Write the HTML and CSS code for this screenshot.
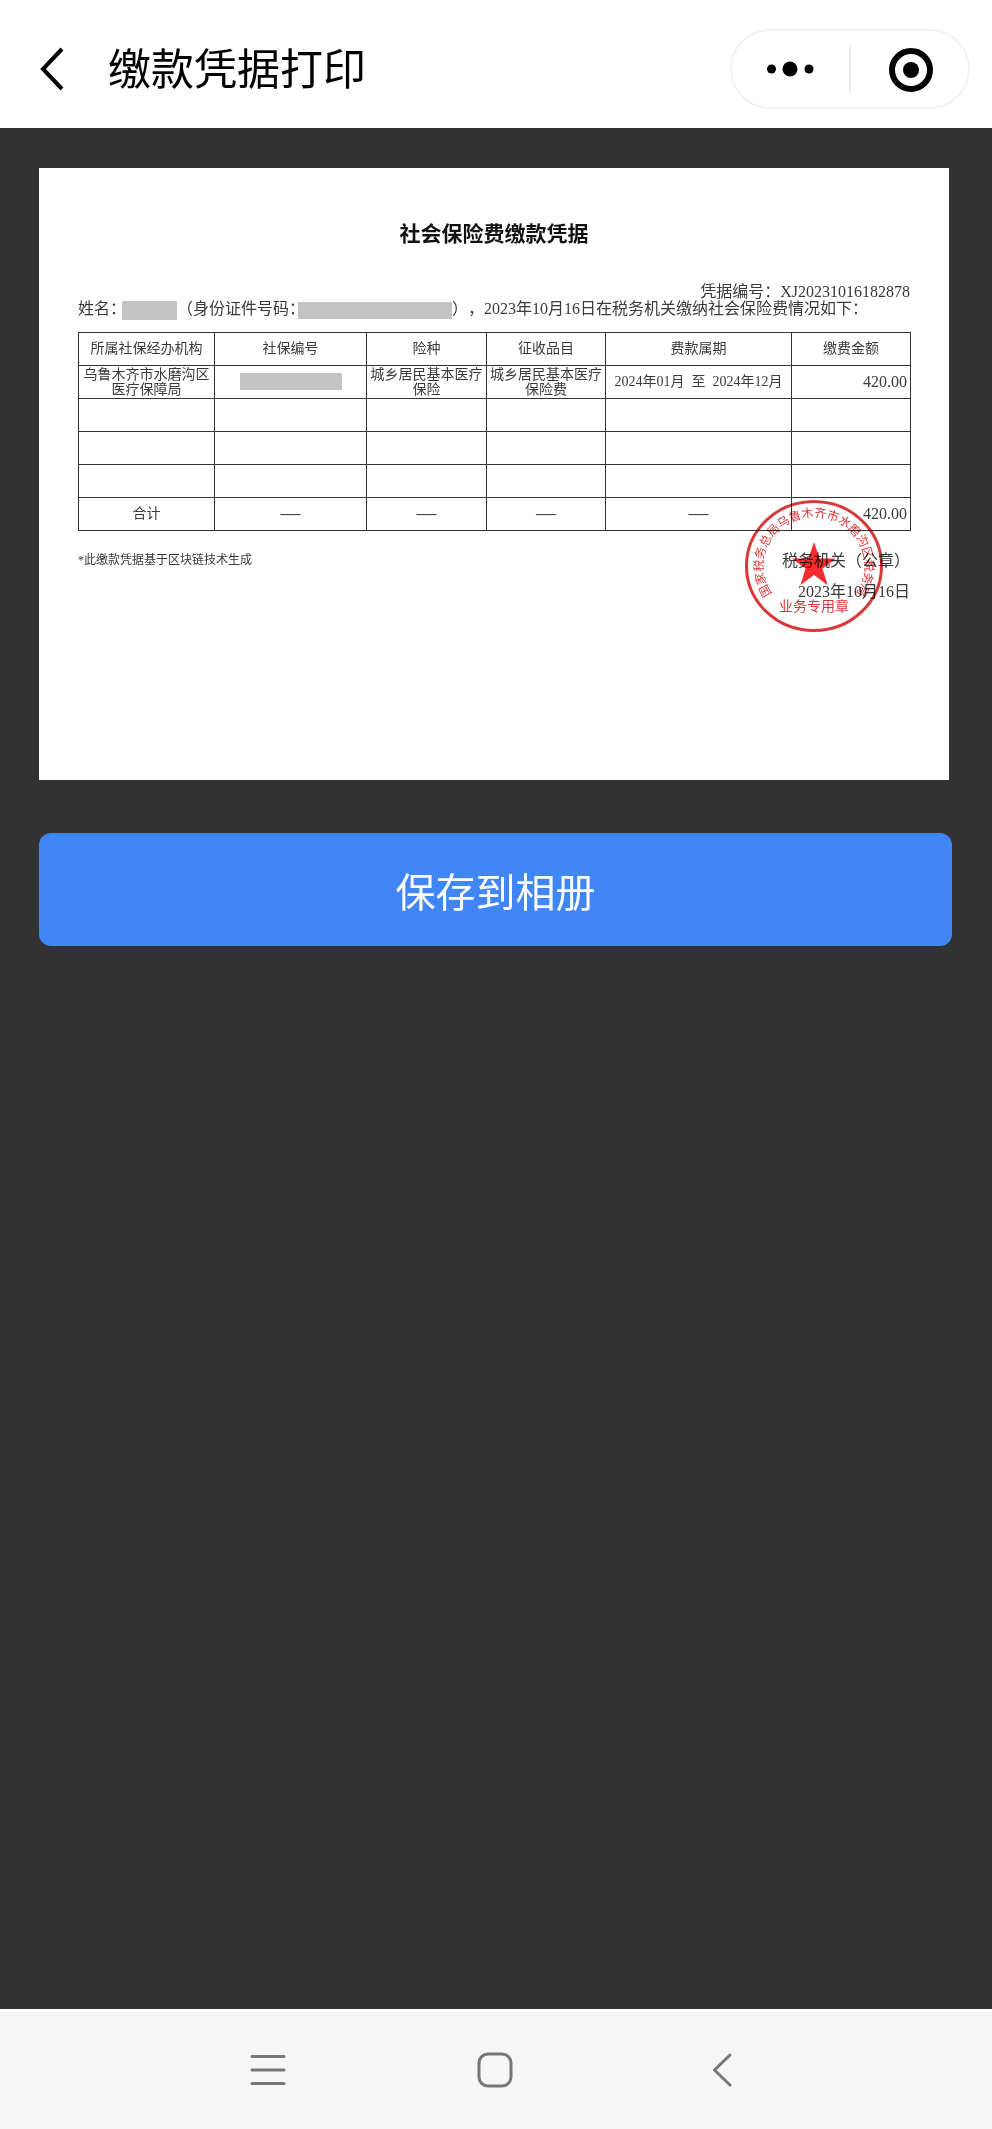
FILE: index.html
```html
<!DOCTYPE html>
<html lang="zh-CN">
<head>
<meta charset="utf-8">
<meta name="viewport" content="width=device-width, initial-scale=1">
<title>缴款凭据打印</title>
<link rel="stylesheet" href="styles.css">
</head>
<body>
<header class="topbar">
  <button class="back" type="button" aria-label="返回">
    <svg width="24" height="44" viewBox="0 0 24 44"><path d="M22 2 3 22 22 42" fill="none" stroke="#000" stroke-width="4"/></svg>
  </button>
  <h1 class="page-title">缴款凭据打印</h1>
  <div class="capsule">
    <button class="capsule-btn" type="button" aria-label="更多">
      <svg width="48" height="16" viewBox="0 0 48 16"><circle cx="4.500" cy="8" r="4.5"/><circle cx="23" cy="8" r="7.5"/><circle cx="42" cy="8" r="4.5"/></svg>
    </button>
    <span class="capsule-line"></span>
    <button class="capsule-btn" type="button" aria-label="关闭">
      <svg width="46" height="46" viewBox="0 0 46 46"><circle cx="24" cy="24" r="19" fill="none" stroke="#000" stroke-width="6"/><circle cx="24" cy="24" r="8"/></svg>
    </button>
  </div>
</header>

<main class="content">
  <article class="sheet">
    <h2 class="sheet-title">社会保险费缴款凭据</h2>
    <p class="serial">凭据编号：XJ20231016182878</p>
    <p class="summary">姓名：<span class="mask mask-name"></span>（身份证件号码：<span class="mask mask-id"></span>），2023年10月16日在税务机关缴纳社会保险费情况如下：</p>
    <table class="fees">
      <colgroup><col class="c-org"><col class="c-no"><col class="c-kind"><col class="c-item"><col class="c-period"><col class="c-sum"></colgroup>
      <thead>
        <tr><th>所属社保经办机构</th><th>社保编号</th><th>险种</th><th>征收品目</th><th>费款属期</th><th>缴费金额</th></tr>
      </thead>
      <tbody>
        <tr><td>乌鲁木齐市水磨沟区<br>医疗保障局</td><td><span class="mask mask-no"></span></td><td>城乡居民基本医疗<br>保险</td><td>城乡居民基本医疗<br>保险费</td><td>2024年01月&nbsp; 至 &nbsp;2024年12月</td><td class="amount">420.00</td></tr>
        <tr><td></td><td></td><td></td><td></td><td></td><td></td></tr>
        <tr><td></td><td></td><td></td><td></td><td></td><td></td></tr>
        <tr><td></td><td></td><td></td><td></td><td></td><td></td></tr>
        <tr><td>合计</td><td class="dash">—</td><td class="dash">—</td><td class="dash">—</td><td class="dash">—</td><td class="amount">420.00</td></tr>
      </tbody>
    </table>
    <footer class="sheet-foot">
      <p class="note">*此缴款凭据基于区块链技术生成</p>
      <div class="sign">
        <p>税务机关（公章）</p>
        <p>2023年10月16日</p>
        <svg class="seal" width="140" height="134" viewBox="0 0 140 134">
          <defs><path id="seal-arc" d="M70 116A51 49 0 0 1 70 18A51 49 0 0 1 70 116"/></defs>
          <ellipse cx="70" cy="67" rx="67.5" ry="64.5" fill="none" stroke="#d9383a" stroke-width="3"/>
          <text class="seal-ring" text-anchor="middle"><textPath href="#seal-arc" startOffset="50%">国家税务总局乌鲁木齐市水磨沟区税务局</textPath></text>
          <path d="M70 43 75.500 59.500H92L78.500 69.500 83.500 86 70 76 56.500 86 61.500 69.500 48 59.500H64.500Z" fill="#f52a2c"/>
          <text class="seal-base" x="70" y="112" text-anchor="middle">业务专用章</text>
        </svg>
      </div>
    </footer>
  </article>
  <button class="save" type="button">保存到相册</button>
</main>

<nav class="sysbar">
  <button type="button" aria-label="最近任务">
    <svg width="36" height="36" viewBox="0 0 36 36"><path d="M2 4.500h32M2 18h32M2 31.500h32"/></svg>
  </button>
  <button type="button" aria-label="主屏幕">
    <svg width="36" height="36" viewBox="0 0 36 36"><rect x="2" y="2" width="32" height="32" rx="9"/></svg>
  </button>
  <button type="button" aria-label="返回上一级">
    <svg width="36" height="36" viewBox="0 0 36 36"><path d="M26 3 10.500 18 26 33"/></svg>
  </button>
</nav>
</body>
</html>
```

FILE: styles.css
```css
* {
  box-sizing: border-box;
}

body {
  margin: 0;
  min-height: 100vh;
  display: flex;
  flex-direction: column;
  background: #323232;
  color: #000;
  font-family: "Noto Sans CJK SC", sans-serif;
  text-spacing-trim: space-all;
}

h1, h2, p {
  margin: 0;
  font-weight: 400;
}

button {
  display: flex;
  align-items: center;
  justify-content: center;
  padding: 0;
  border: 0;
  background: none;
  font-family: inherit;
}

.topbar {
  display: flex;
  align-items: center;
  height: 128px;
  padding: 10px 22px 0 40px;
  background: #fff;
}

.page-title {
  flex: 1;
  margin-left: 44px;
  padding-bottom: 6px;
  font-size: 43px;
  line-height: 60px;
}

.capsule {
  display: flex;
  align-items: center;
  width: 240px;
  height: 80px;
  border: 2px solid #f2f2f2;
  border-radius: 40px;
}

.capsule-btn {
  flex: 1;
  height: 100%;
}

.capsule-line {
  width: 2px;
  height: 48px;
  background: #ededed;
}

.content {
  flex: 1;
  padding: 40px 40px 0 39px;
}

.sheet {
  min-height: 612px;
  margin-right: 3px;
  padding: 51px 39px 40px;
  background: #fff;
  color: #3a3a3a;
  font-family: "Liberation Serif", "Noto Sans CJK SC", serif;
  font-size: 16px;
  line-height: 17px;
}

.sheet-title {
  margin-bottom: 34px;
  color: #111;
  font-size: 21px;
  font-weight: 700;
  line-height: 30px;
  text-align: center;
}

.serial {
  text-align: right;
}

.summary {
  white-space: nowrap;
}

.mask {
  display: inline-block;
  vertical-align: middle;
  background: #c3c3c3;
}

.mask-name {
  width: 55px;
  height: 19px;
  margin: -2px 0 -2px -4px;
}

.mask-id {
  width: 154px;
  height: 17px;
  margin: -1px 0 -1px -7px;
}

.mask-no {
  width: 102px;
  height: 17px;
}

.fees {
  width: 100%;
  margin-top: 14px;
  border-collapse: collapse;
  table-layout: fixed;
  font-size: 14px;
  line-height: 15px;
}

.c-org { width: 136px; }
.c-no { width: 152px; }
.c-kind { width: 120px; }
.c-item { width: 119px; }
.c-period { width: 186px; }
.c-sum { width: 119px; }

.fees th,
.fees td {
  height: 33px;
  padding: 0;
  border: 1px solid #333;
  font-weight: 400;
  text-align: center;
  white-space: nowrap;
}

.fees .amount {
  padding-right: 3px;
  font-size: 16px;
  text-align: right;
}

.fees .dash {
  font-size: 20px;
}

.sheet-foot {
  display: flex;
  justify-content: space-between;
  padding-top: 21px;
}

.note {
  font-size: 12px;
}

.sign {
  position: relative;
  display: grid;
  gap: 14px;
  text-align: right;
}

.seal {
  position: absolute;
  right: 26px;
  top: -53px;
  mix-blend-mode: multiply;
}

.seal text {
  fill: #d9383a;
  font-family: "Noto Sans CJK SC", sans-serif;
  font-weight: 400;
}

.seal-ring {
  font-size: 12px;
}

.seal-base {
  font-size: 14px;
}

.save {
  width: 100%;
  height: 113px;
  margin-top: 53px;
  border-radius: 12px;
  background: #4186f6;
  color: #fff;
  font-size: 40px;
}

.sysbar {
  display: flex;
  justify-content: center;
  gap: 147px;
  height: 120px;
  padding: 0 2px 2px 0;
  border-top: 3px solid #fff;
  background: #f6f6f6;
}

.sysbar button {
  width: 80px;
}

.sysbar svg {
  fill: none;
  stroke: #777;
  stroke-width: 3;
  stroke-linecap: round;
  stroke-linejoin: round;
}
```
